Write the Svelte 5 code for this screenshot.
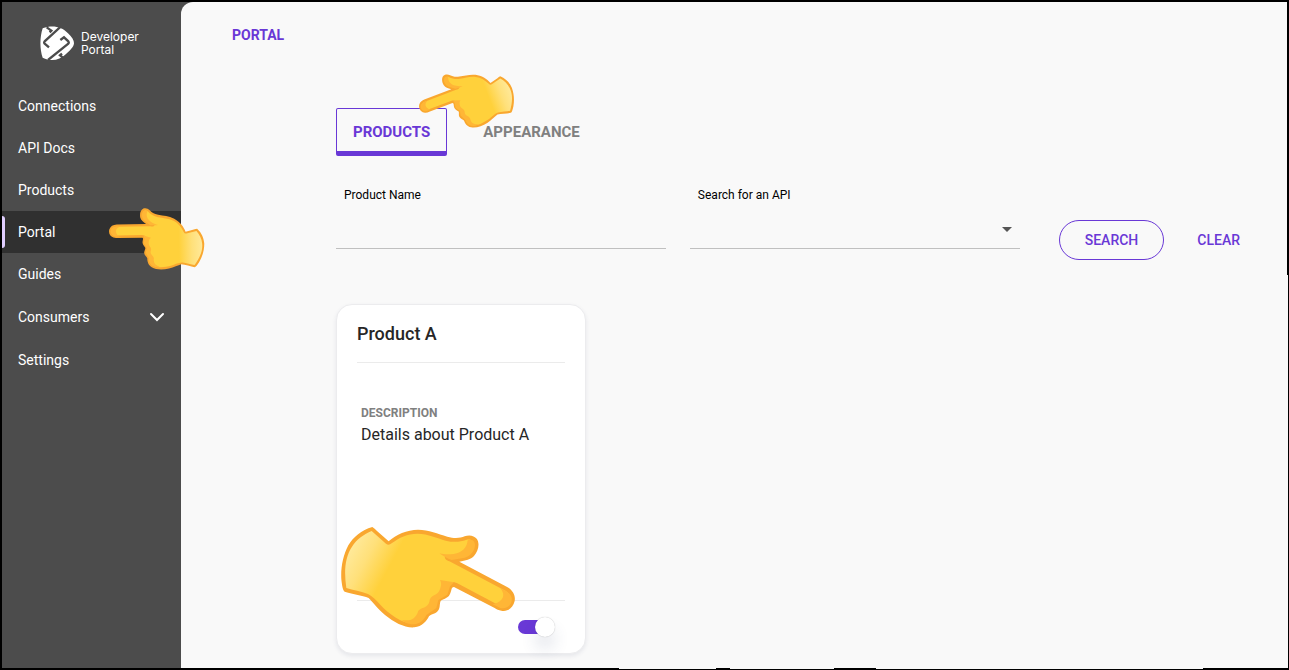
<script lang="ts">
  interface NavItem {
    label: string;
    active?: boolean;
    expandable?: boolean;
  }

  const navItems: NavItem[] = [
    { label: 'Connections' },
    { label: 'API Docs' },
    { label: 'Products' },
    { label: 'Portal', active: true },
    { label: 'Guides' },
    { label: 'Consumers', expandable: true },
    { label: 'Settings' },
  ];

  const tabs = ['Products', 'Appearance'];

  let activeTab = $state('Products');
  let productName = $state('');
  let api = $state('');
  let published = $state(true);

  function clear() {
    productName = '';
    api = '';
  }
</script>

{#snippet hand()}
  <path
    fill="#f9a72f"
    d="M127 51 Q134 55 141 63 L176 94 C198 73 231 60 264 59 C297 60 323 71 352 80 C374 86 391 84 404 79 C418 73 433 77 440 86 C451 101 444 124 432 138 C422 149 407 151 388 155 L530 230 C548 240 557 255 554 273 C549 294 533 306 514 302 C506 301 500 298 494 294 L372 231 C362 231 366 244 358 256 C351 266 338 268 332 273 C328 281 331 293 325 301 C318 312 304 312 297 319 C289 334 277 350 253 352 C224 354 193 338 165 315 C144 298 129 277 116 264 C97 255 63 252 44 245 C38 242 36 226 34 208 C32 172 39 137 55 106 C70 81 94 60 127 51 Z"
  />
  <path
    fill="url(#hand-skin)"
    d="M125 63 L168 101 Q176 108 185 100 C207 83 233 71 262 71 C296 72 320 84 347 92 C370 98 392 96 408 90 C421 86 431 92 431 103 C431 119 422 135 403 138 L345 137 C342 149 352 152 361 155 L526 242 C540 250 544 262 539 277 C533 291 519 293 505 285 L382 220 C366 213 355 216 351 226 L346 246 C340 256 325 261 321 270 L315 292 C309 301 293 305 287 315 C278 330 265 341 248 340 C216 341 174 309 151 284 C139 271 127 258 114 252 C94 244 69 241 49 234 C42 186 44 143 66 110 C80 87 102 73 125 63 Z"
  />
  <path
    fill="#ffb636"
    d="M413 91 C411 112 398 128 371 132 C353 134 341 133 328 130 C343 140 351 145 365 150 L404 143 C425 137 438 117 434 99 C431 91 422 87 413 91 Z M511 235 C528 255 520 276 488 283 L511 294 C534 298 548 281 545 263 C541 249 525 241 511 235 Z M330 210 L372 217 L360 229 L352 254 L325 270 L319 294 L289 315 C278 337 263 343 247 343 C236 342 221 337 216 330 C242 334 257 327 265 302 C273 292 294 294 298 275 C300 253 320 258 328 242 C333 230 336 220 330 210 Z"
  />
{/snippet}

<div class="portal">
  <aside class="sidebar">
    <a class="brand" href="#home">
      <svg class="brand-mark" viewBox="0 0 102 102" aria-hidden="true">
        <path
          fill="#fff"
          d="M8 7 C35 -3 64 0 84 22 C96 33 102 43 102 52 C101 64 89 74 78 84 C57 105 31 106 8 95 C-1 69 -1 34 8 7 Z"
        />
        <g fill="none" stroke="#4c4c4c" stroke-width="7">
          <path d="M62 2 L14 46 Q11 50 14 53 L27 64" />
          <path d="M61 42 L72 34 L85 46 Q88 50 84 54 L24 102" />
          <path d="M20 4 L34 14 L29 19" />
          <path d="M70 96 L60 88 L66 83" />
        </g>
      </svg>
      <span class="brand-name">Developer<br />Portal</span>
    </a>

    <nav>
      <ul class="nav-list">
        {#each navItems as item}
          <li class="nav-item" class:active={item.active} class:expandable={item.expandable}>
            <a href="#{item.label}">
              {item.label}
              {#if item.expandable}
                <svg class="chevron" viewBox="0 0 16 10" aria-hidden="true">
                  <path d="M2 2 L8 8 L14 2" fill="none" stroke="#fff" stroke-width="2" stroke-linecap="round" />
                </svg>
              {/if}
            </a>
            {#if item.active}
              <svg class="hand hand-nav" viewBox="0 0 96 64" aria-hidden="true">
                <g transform="translate(113 24) scale(-0.1825 0.1825) rotate(-27)">{@render hand()}</g>
              </svg>
            {/if}
          </li>
        {/each}
      </ul>
    </nav>
  </aside>

  <main class="main">
    <h1 class="page-title">PORTAL</h1>

    <div class="content">
      <div class="tabs" role="tablist">
        {#each tabs as tab}
          <button
            class="tab"
            class:selected={tab === activeTab}
            role="tab"
            aria-selected={tab === activeTab}
            onclick={() => (activeTab = tab)}
          >
            {tab.toUpperCase()}
          </button>
        {/each}
        <svg class="hand hand-tab" viewBox="0 0 98 58" aria-hidden="true">
          <g transform="translate(106 -2) rotate(-20) scale(-0.18 0.18) rotate(-27)">{@render hand()}</g>
        </svg>
      </div>

      <form class="filters" onsubmit={(e) => e.preventDefault()}>
        <div class="field">
          <label for="product-name">Product Name</label>
          <input id="product-name" type="text" bind:value={productName} />
        </div>
        <div class="field">
          <label for="api">Search for an API</label>
          <div class="select-wrap">
            <select id="api" bind:value={api}>
              <option value=""></option>
            </select>
          </div>
        </div>
        <div class="actions">
          <button class="btn btn-outline" type="submit">SEARCH</button>
          <button class="btn" type="button" onclick={clear}>CLEAR</button>
        </div>
      </form>

      <article class="card">
        <h2 class="card-title">Product A</h2>
        <div class="card-body">
          <h3>DESCRIPTION</h3>
          <p>Details about Product A</p>
        </div>
        <div class="card-footer">
          <input class="toggle" type="checkbox" aria-label="Publish Product A" bind:checked={published} />
        </div>
        <svg class="hand hand-card" viewBox="30 48 528 309" aria-hidden="true">
          <defs>
            <linearGradient id="hand-skin" x1="0" y1="0.3" x2="1" y2="0.6">
              <stop offset="0" stop-color="#ffe999" />
              <stop offset="0.12" stop-color="#ffe07a" />
              <stop offset="0.27" stop-color="#ffd13b" />
              <stop offset="1" stop-color="#ffd13b" />
            </linearGradient>
          </defs>
          {@render hand()}
        </svg>
      </article>
    </div>
  </main>
</div>

<style>
  :global(body) {
    margin: 0;
    background: #000;
  }

  .portal {
    --purple: #6938d6;
    position: relative;
    box-sizing: border-box;
    display: flex;
    min-height: 100vh;
    border: 2px solid #000;
    border-width: 2px 1px 1px 2px;
    background: #4c4c4c;
    font-family: Roboto, sans-serif;
    font-size: 14px;
  }

  /* uneven inner edge of the window frame */
  .portal::before,
  .portal::after {
    content: '';
    position: absolute;
    right: 0;
    z-index: 2;
  }

  .portal::before {
    top: 0;
    width: 1px;
    height: 41%;
    background: #000;
  }

  .portal::after {
    bottom: 0;
    left: 0;
    height: 1px;
    background: linear-gradient(
      90deg,
      #000 48%,
      transparent 48% 55.5%,
      #000 55.5% 56.6%,
      transparent 56.6% 64.7%,
      #000 64.7% 68%,
      transparent 68% 93.4%,
      #000 93.4%
    );
  }

  .sidebar {
    flex: 0 0 179px;
    color: #fff;
  }

  .brand {
    display: flex;
    align-items: center;
    gap: 7px;
    height: 81px;
    margin-bottom: 2px;
    padding-left: 38px;
    color: #fff;
    text-decoration: none;
  }

  .brand-mark {
    width: 34px;
    height: 34px;
  }

  .brand-name {
    font-family: Inter, sans-serif;
    font-size: 12px;
    font-weight: 400;
    line-height: 13px;
  }

  .nav-list {
    margin: 0;
    padding: 0;
    list-style: none;
  }

  .nav-item {
    position: relative;
    height: 42px;
  }

  .nav-item.expandable {
    height: 44px;
  }

  .nav-item a {
    display: flex;
    align-items: center;
    justify-content: space-between;
    height: 100%;
    padding: 0 16px;
    color: #fff;
    text-decoration: none;
  }

  .nav-item.active {
    background: #303030;
  }

  .nav-item.active::before {
    content: '';
    position: absolute;
    top: 5px;
    left: 0;
    width: 3px;
    height: 32px;
    border-radius: 0 3px 3px 0;
    background: #e0ceff;
  }

  .chevron {
    width: 16px;
    height: 10px;
  }

  .hand {
    position: absolute;
    z-index: 1;
    overflow: visible;
    pointer-events: none;
  }

  .hand-nav {
    top: -4px;
    left: 107px;
    width: 96px;
    height: 64px;
  }

  .hand-tab {
    top: -36px;
    left: 82px;
    width: 98px;
    height: 58px;
  }

  .hand-card {
    left: 3px;
    bottom: 24px;
    width: 176px;
    height: 103px;
  }

  .main {
    flex: 1;
    border-top-left-radius: 12px;
    background: #f9f9f9;
  }

  .page-title {
    margin: 25px 51px 0;
    color: var(--purple);
    font-size: 14px;
    font-weight: 700;
    line-height: 16px;
  }

  .content {
    padding: 65px 32px 14px 155px;
  }

  .tabs {
    position: relative;
    display: flex;
    gap: 19px;
  }

  .tab {
    height: 48px;
    padding: 4px 16px 0;
    border: 1px solid transparent;
    border-bottom-width: 5px;
    border-radius: 2px;
    background: none;
    color: #808080;
    font: 700 15px Roboto, sans-serif;
    cursor: pointer;
  }

  .tab.selected {
    border-color: var(--purple);
    color: var(--purple);
  }

  .filters {
    display: flex;
    gap: 24px;
    margin-top: 31px;
  }

  .field {
    flex: 1;
    min-width: 0;
  }

  .field label {
    display: block;
    padding-left: 8px;
    color: #000;
    font-size: 12px;
    line-height: 16px;
  }

  .field input,
  .field select {
    box-sizing: border-box;
    display: block;
    width: 100%;
    height: 46px;
    padding: 8px;
    border: 0;
    border-bottom: 1px solid #c0c0c0;
    border-radius: 0;
    outline: 0;
    background: none;
    font: 14px Roboto, sans-serif;
    appearance: none;
  }

  .select-wrap {
    position: relative;
  }

  .select-wrap::after {
    content: '';
    position: absolute;
    top: 24px;
    right: 8px;
    border: 5px solid transparent;
    border-top-color: #555;
    border-bottom: 0;
    pointer-events: none;
  }

  .actions {
    display: flex;
    align-items: flex-end;
    gap: 17px;
    padding-left: 15px;
    margin-bottom: -11px;
  }

  .btn {
    height: 40px;
    padding: 0 16px;
    border: 0;
    border-radius: 20px;
    background: none;
    color: var(--purple);
    font: 500 14px Roboto, sans-serif;
    cursor: pointer;
  }

  .btn-outline {
    padding: 0 25px;
    border: 1px solid var(--purple);
  }

  .card {
    position: relative;
    box-sizing: border-box;
    display: flex;
    flex-direction: column;
    width: 250px;
    min-height: 350px;
    margin-top: 55px;
    padding: 0 20px;
    border: 1px solid #ececee;
    border-radius: 16px;
    background: #fff;
    box-shadow: 0 2px 4px rgba(60, 70, 110, 0.1);
    color: #262626;
  }

  .card-title {
    margin: 0;
    padding: 17px 0 16px;
    border-bottom: 1px solid #ebebeb;
    font-size: 18px;
    font-weight: 500;
    line-height: 24px;
  }

  .card-body {
    flex: 1;
    padding: 42px 4px 0;
  }

  .card-body h3 {
    margin: 0;
    color: #808080;
    font-size: 12px;
    font-weight: 700;
    line-height: 16px;
  }

  .card-body p {
    margin: 0;
    font-size: 16px;
    line-height: 28px;
  }

  .card-footer {
    display: flex;
    justify-content: flex-end;
    padding: 16px 11px 16px 0;
    border-top: 1px solid #ebebeb;
  }

  .toggle {
    position: relative;
    width: 36px;
    height: 14px;
    margin: 3px 0;
    border-radius: 7px;
    background: #bbb;
    appearance: none;
    cursor: pointer;
  }

  .toggle::before {
    content: '';
    position: absolute;
    top: -3px;
    left: 0;
    width: 20px;
    height: 20px;
    border-radius: 50%;
    background: #fff;
    box-shadow: 0 0 1px rgba(0, 0, 0, 0.3), 0 12px 16px rgba(60, 70, 110, 0.14);
  }

  .toggle:checked {
    background: var(--purple);
  }

  .toggle:checked::before {
    left: 17px;
  }
</style>
